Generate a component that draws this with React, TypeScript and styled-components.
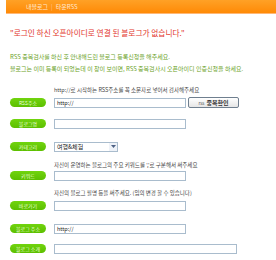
import React, { FC } from 'react';
import styled, { createGlobalStyle } from 'styled-components';

const GlobalStyle = createGlobalStyle`
    html, body{
        margin: 0;
        padding: 0;
        background: #ffffff;
        font-family: "Noto Sans CJK KR", "Noto Sans", sans-serif;
    }
`;

const Page = styled.div`
    width: 276px;
    height: 260px;
    overflow: hidden;
    display: flex;
    flex-direction: column;
`;

const TopBar = styled.div`
    margin-left: 6px;
    height: 13px;
    border-bottom: 1px solid #ffb877;
    background: linear-gradient(#ffa126, #ff8a06);
    display: flex;
    flex-direction: row;
    align-items: center;
    padding-left: 20px;
    gap: 3px;
    font-size: 6px;
    color: #ffe9d2;
    & > span.sep{
        color: #ffc690;
    }
`;

const Title = styled.div`
    margin-top: 14px;
    margin-left: 10px;
    height: 10px;
    line-height: 10px;
    font-size: 7.7px;
    color: #e2352c;
    white-space: nowrap;
`;

const Notice = styled.div`
    margin-top: 13px;
    margin-left: 10px;
    font-size: 6px;
    line-height: 12px;
    color: #6a9f27;
    white-space: nowrap;
`;

const Form = styled.div`
    margin-top: 12px;
    display: flex;
    flex-direction: column;
`;

interface GapProps{
    mt: number;
}

const Hint = styled.div<GapProps>`
    margin-top: ${(p) => p.mt}px;
    margin-left: 54px;
    height: 7px;
    line-height: 7px;
    font-size: 5.5px;
    color: #444;
    white-space: nowrap;
`;

const Row = styled.div<GapProps>`
    margin-top: ${(p) => p.mt}px;
    height: 11px;
    display: grid;
    grid-template-columns: 54px auto;
    align-items: center;
`;

const Pill = styled.div`
    margin-left: 10px;
    width: 36px;
    height: 9px;
    border-radius: 5px;
    background: linear-gradient(#71d40e, #5cbf00);
    color: #e8ffd8;
    font-size: 5px;
    line-height: 9px;
    text-align: center;
    white-space: nowrap;
`;

const Fields = styled.div`
    display: flex;
    flex-direction: row;
    align-items: center;
    gap: 2px;
`;

interface InputProps{
    w?: number;
}

const TextBox = styled.div<InputProps>`
    box-sizing: border-box;
    width: ${(p) => p.w || 132}px;
    height: 10px;
    border: 1px solid #a9bccd;
    background: #fff;
    font-size: 5.5px;
    line-height: 8px;
    padding-left: 2px;
    color: #222;
`;

const Select = styled.div`
    box-sizing: border-box;
    width: 64px;
    height: 10px;
    border: 1px solid #a9bccd;
    display: flex;
    flex-direction: row;
    align-items: center;
    justify-content: space-between;
    font-size: 6px;
    color: #222;
    padding-left: 2px;
`;

const Arrow = styled.div`
    width: 8px;
    height: 8px;
    background: #eef2f8;
    display: flex;
    align-items: center;
    justify-content: center;
`;

const CheckButton = styled.div`
    box-sizing: border-box;
    width: 51px;
    height: 11px;
    border: 1px solid #6f7f8f;
    border-radius: 2px;
    background: linear-gradient(#ffffff, #e6e6e6);
    display: flex;
    align-items: center;
    justify-content: center;
    gap: 2px;
    color: #333;
    & > small{
        font-size: 4.5px;
        color: #555;
    }
    & > b{
        font-size: 6px;
    }
`;

interface FieldRowProps{
    mt: number;
    label: string;
    children?: React.ReactNode;
}

const FieldRow: FC<FieldRowProps> = ({mt, label, children}) => (
    <Row mt={mt}>
        <Pill>{label}</Pill>
        <Fields>{children}</Fields>
    </Row>
);

export default function App() {
    return (
        <Page>
            <GlobalStyle />
            <TopBar>
                <span>내블로그</span>
                <span className="sep">|</span>
                <span>타운RSS</span>
            </TopBar>
            <Title>"로그인 하신 오픈아이디로 연결 된 블로그가 없습니다."</Title>
            <Notice>
                RSS 중복검사를 하신 후 안내해드린 블로그 등록신청을 해주세요.<br />
                블로그는 이미 등록이 되었는데 이 창이 보이면, RSS 중복검사시 오픈아이디 인증신청을 하세요.
            </Notice>
            <Form>
                <Hint mt={0}>http://로 시작하는 RSS주소를 꼭 소문자로 넣어서 검사해주세요</Hint>
                <FieldRow mt={3} label="RSS주소">
                    <TextBox>http://</TextBox>
                    <CheckButton><small>rss</small><b>중복확인</b></CheckButton>
                </FieldRow>
                <FieldRow mt={10} label="블로그명">
                    <TextBox />
                </FieldRow>
                <FieldRow mt={12} label="카테고리">
                    <Select>
                        <span>여행&amp;체험</span>
                        <Arrow>
                            <svg width="5" height="3" viewBox="0 0 5 3">
                                <path d="M0 0 L5 0 L2.5 3 Z" fill="#4d6185" />
                            </svg>
                        </Arrow>
                    </Select>
                </FieldRow>
                <Hint mt={10}>자신이 운영하는 블로그의 주요 키워드를 ','로 구분해서 써주세요</Hint>
                <FieldRow mt={1} label="키워드">
                    <TextBox />
                </FieldRow>
                <Hint mt={9}>자신의 블로그 필명 등을 써주세요. (임의 변경 할 수 있습니다)</Hint>
                <FieldRow mt={3} label="바로가기">
                    <TextBox />
                </FieldRow>
                <FieldRow mt={12} label="블로그 주소">
                    <TextBox>http://</TextBox>
                </FieldRow>
                <FieldRow mt={9} label="블로그 소개">
                    <TextBox w={183} />
                </FieldRow>
            </Form>
        </Page>
    );
}
